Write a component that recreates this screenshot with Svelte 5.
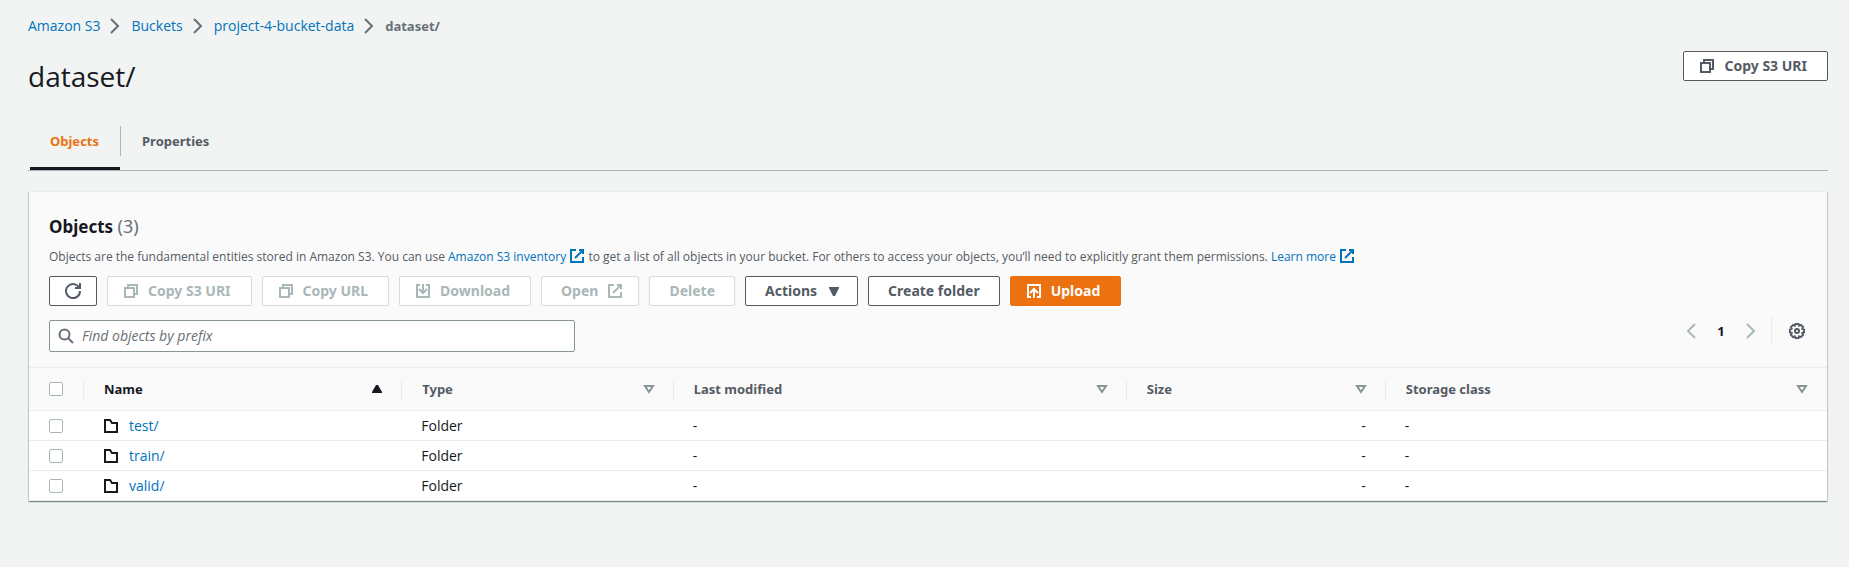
<script>
  const crumbs = ['Amazon S3', 'Buckets', 'project-4-bucket-data'];
  const columns = [
    { key: 'name', label: 'Name', sorted: true },
    { key: 'type', label: 'Type' },
    { key: 'modified', label: 'Last modified' },
    { key: 'size', label: 'Size' },
    { key: 'storage', label: 'Storage class' }
  ];
  const rows = [{ name: 'test/' }, { name: 'train/' }, { name: 'valid/' }];
</script>

{#snippet icon(kind)}
  <svg class="icon" viewBox="0 0 16 16" aria-hidden="true">
    {#if kind === 'copy'}
      <path d="M2 5h9v9H2z" /><path d="M5 5V2h9v9h-3" />
    {:else if kind === 'refresh'}
      <path d="M10 5h5V0" /><path d="M15 8a7 7 0 1 1-.7-3" />
    {:else if kind === 'external'}
      <path d="M10 2h4v4" /><path d="M6 10l8-8" /><path d="M14 9v5H2V2h5" />
    {:else if kind === 'download'}
      <path d="M5 2H2v12h12V2h-3" /><path d="M8 1v9" /><path d="M4 6l4 4 4-4" />
    {:else if kind === 'upload'}
      <path d="M5 14H2V2h12v12h-3" /><path d="M8 15V6" /><path d="M4 10l4-4 4 4" />
    {:else if kind === 'folder'}
      <path d="M2 2h5l2 3h5v9H2z" />
    {:else if kind === 'search'}
      <circle cx="6.500" cy="6.500" r="5" /><path d="M15 15l-5-5" />
    {:else if kind === 'next'}
      <path d="M4 1l7 7-7 7" />
    {:else if kind === 'prev'}
      <path d="M12 1L5 8l7 7" />
    {:else if kind === 'caret'}
      <path class="solid" d="M3 4h10v1L9 13H7L3 5z" />
    {:else if kind === 'gear'}
      <circle cx="8" cy="8" r="2" />
      <path d="M6.500 1h3l.6 1.600 1.700-.7 2.200 2.200-.7 1.700 1.700.7v3l-1.700.6.7 1.800-2.200 2.200-1.700-.8-.6 1.700h-3l-.7-1.700-1.700.8-2.200-2.200.8-1.800L1 9.500v-3l1.700-.7-.8-1.700 2.200-2.200 1.700.7z" />
    {/if}
  </svg>
{/snippet}

<div class="page">
  <nav class="crumbs" aria-label="Breadcrumbs">
    {#each crumbs as crumb}
      <a href="#top">{crumb}</a>
      <span class="sep">{@render icon('next')}</span>
    {/each}
    <strong>dataset/</strong>
  </nav>

  <header class="title">
    <h1>dataset/</h1>
    <button class="btn lead">{@render icon('copy')}Copy S3 URI</button>
  </header>

  <div class="tabs" role="tablist">
    <button class="tab active" role="tab" aria-selected="true"><span>Objects</span></button>
    <button class="tab" role="tab" aria-selected="false"><span>Properties</span></button>
  </div>

  <section class="panel">
    <div class="head">
      <h2>Objects <span>(3)</span></h2>
      <p>
        Objects are the fundamental entities stored in Amazon S3. You can use
        <a href="#inventory">Amazon S3 inventory {@render icon('external')}</a>
        to get a list of all objects in your bucket. For others to access your objects, you’ll need to explicitly grant them permissions.
        <a href="#learn">Learn more {@render icon('external')}</a>
      </p>
      <div class="actions">
        <button class="btn refresh" aria-label="Refresh">{@render icon('refresh')}</button>
        <button class="btn lead" disabled>{@render icon('copy')}Copy S3 URI</button>
        <button class="btn lead" disabled>{@render icon('copy')}Copy URL</button>
        <button class="btn lead" disabled>{@render icon('download')}Download</button>
        <button class="btn trail" disabled>Open{@render icon('external')}</button>
        <button class="btn" disabled>Delete</button>
        <button class="btn trail">Actions{@render icon('caret')}</button>
        <button class="btn">Create folder</button>
        <button class="btn lead primary">{@render icon('upload')}Upload</button>
      </div>
      <div class="filter">
        <label class="search">
          {@render icon('search')}
          <input type="text" placeholder="Find objects by prefix" aria-label="Find objects by prefix" />
        </label>
        <div class="pager">
          <button aria-label="Previous page" disabled>{@render icon('prev')}</button>
          <button class="current">1</button>
          <button aria-label="Next page" disabled>{@render icon('next')}</button>
          <span class="rule"></span>
          <button aria-label="Preferences">{@render icon('gear')}</button>
        </div>
      </div>
    </div>

    <table>
      <colgroup>
        <col class="c-check" />
        {#each columns as col}<col class="c-{col.key}" />{/each}
      </colgroup>
      <thead>
        <tr>
          <th><div class="cell"><input type="checkbox" aria-label="Select all" /></div></th>
          {#each columns as col}
            <th class:sorted={col.sorted}>
              <div class="cell">
                {col.label}
                <svg class="sort" viewBox="0 0 10 8" aria-hidden="true">
                  {#if col.sorted}
                    <path class="solid" d="M0 8V7l4-7h2l4 7v1z" />
                  {:else}
                    <path d="M1 1h8L5 7z" />
                  {/if}
                </svg>
              </div>
            </th>
          {/each}
        </tr>
      </thead>
      <tbody>
        {#each rows as row}
          <tr>
            <td class="pick"><input type="checkbox" aria-label="Select {row.name}" /></td>
            <td><a class="object" href="#object">{@render icon('folder')}{row.name}</a></td>
            <td>Folder</td>
            <td>-</td>
            <td class="num">-</td>
            <td>-</td>
          </tr>
        {/each}
      </tbody>
    </table>
  </section>
</div>

<style>
  :global(body) {
    background: #f2f3f3;
  }
  .page {
    padding: 16px 21px 60px 28px;
    font: 14px/20px 'Open Sans', 'Noto Sans', sans-serif;
    color: #16191f;
  }
  a {
    color: #0073bb;
    text-decoration: none;
  }
  button,
  input {
    font: inherit;
    margin: 0;
  }
  strong,
  .btn,
  .tab,
  .current,
  h2,
  th {
    font-family: 'Noto Sans', 'Open Sans', sans-serif;
    font-weight: 700;
  }
  .icon {
    width: 16px;
    height: 16px;
    flex: none;
    fill: none;
    stroke: currentColor;
    stroke-width: 2;
  }
  .icon .solid {
    fill: currentColor;
    stroke: none;
  }

  .crumbs {
    display: flex;
    align-items: center;
    color: #687078;
  }
  .crumbs strong {
    font-size: 13px;
  }
  .sep {
    display: flex;
    margin: 0 8px 0 7px;
  }

  .title {
    display: flex;
    justify-content: space-between;
    align-items: flex-start;
    margin-top: 15px;
  }
  h1 {
    margin: 7px 0 0;
    font-size: 28px;
    line-height: 36px;
    font-weight: 400;
  }

  .btn {
    display: inline-flex;
    align-items: center;
    gap: 9px;
    height: 30px;
    padding: 0 19px;
    border: 1px solid #545b64;
    border-radius: 2px;
    background: #fff;
    color: #545b64;
    white-space: nowrap;
  }
  .lead {
    padding: 0 20px 0 15px;
  }
  .trail {
    padding-right: 15px;
  }
  .refresh {
    padding: 0 15px;
  }
  .btn:disabled {
    border-color: #d5dbdb;
    color: #aab7b8;
  }
  .btn.primary {
    background: #ec7211;
    border-color: #ec7211;
    color: #fff;
  }

  .tabs {
    display: flex;
    margin-top: 32px;
    border-bottom: 1px solid #aab7b8;
  }
  .tab {
    padding: 0 0 11px;
    border: 0;
    border-bottom: 3px solid transparent;
    background: none;
    color: #545b64;
    font-size: 13px;
  }
  .tab span {
    display: block;
    padding: 5px 21px;
  }
  .tab.active {
    margin-left: 2px;
    border-bottom-color: #16191f;
    color: #ec7211;
  }
  .tab.active span {
    padding-left: 20px;
  }
  .tab + .tab span {
    border-left: 1px solid #aab7b8;
  }

  .panel {
    margin: 20px 1px 0;
    background: #fff;
    border-top: 1px solid #eaeded;
    box-shadow: 0 1px 1px 0 rgba(0, 28, 36, 0.3), 1px 1px 1px 0 rgba(0, 28, 36, 0.15), -1px 1px 1px 0 rgba(0, 28, 36, 0.15);
  }
  .head {
    padding: 22px 20px 15px;
    background: #fafafa;
    border-bottom: 1px solid #eaeded;
  }
  h2 {
    margin: 0;
    font-size: 17px;
    line-height: 24px;
  }
  h2 span {
    color: #687078;
    font-size: 18px;
    font-weight: 400;
  }
  p {
    margin: 8px 0 9px;
    font-size: 12px;
    line-height: 20px;
    color: #545b64;
  }
  p .icon {
    vertical-align: -3px;
  }
  .actions {
    display: flex;
    flex-wrap: wrap;
    gap: 10px;
  }
  .filter {
    display: flex;
    justify-content: space-between;
    margin-top: 14px;
  }
  .search {
    display: flex;
    align-items: center;
    gap: 8px;
    flex: 0 1 516px;
    height: 30px;
    padding: 0 0 0 8px;
    border: 1px solid #879596;
    border-radius: 2px;
    background: #fff;
    color: #687078;
  }
  .search input {
    flex: 1;
    min-width: 0;
    padding: 0;
    border: 0;
    outline: 0;
    background: none;
  }
  .search input::placeholder {
    color: #687078;
    font-style: italic;
    opacity: 1;
  }
  .pager {
    display: flex;
    align-items: center;
    height: 22px;
    padding-right: 2px;
  }
  .pager button {
    display: flex;
    justify-content: center;
    padding: 0;
    border: 0;
    background: none;
    color: #545b64;
  }
  .pager button:disabled {
    color: #aab7b8;
  }
  .pager .current {
    width: 44px;
    font-size: 13px;
    color: #16191f;
  }
  .rule {
    height: 30px;
    margin: 0 17px 0 12px;
    border-left: 1px solid #eaeded;
  }

  table {
    width: 100%;
    table-layout: fixed;
    border-collapse: separate;
    border-spacing: 0;
  }
  .c-check {
    width: 55px;
  }
  .c-name {
    width: 17.7%;
  }
  .c-type {
    width: 15.1%;
  }
  .c-modified {
    width: 25.2%;
  }
  .c-size {
    width: 14.4%;
  }
  th {
    padding: 11px 0 10px;
    background: #fafafa;
    border-bottom: 1px solid #eaeded;
    color: #545b64;
    font-size: 13px;
    text-align: left;
  }
  th.sorted {
    color: #16191f;
  }
  .cell {
    display: flex;
    align-items: center;
    justify-content: space-between;
    height: 19px;
    padding: 0 19px 2px 20px;
    border-right: 1px solid #eaeded;
  }
  th:last-child .cell {
    border-right-color: transparent;
  }
  .sort {
    width: 10px;
    height: 8px;
    overflow: visible;
    fill: none;
    stroke: #879596;
    stroke-width: 2;
  }
  .sort .solid {
    fill: #16191f;
    stroke: none;
  }
  td {
    height: 29px;
    padding: 0 20px 0 19px;
    border-bottom: 1px solid #eaeded;
  }
  .pick {
    padding-left: 20px;
  }
  .num {
    text-align: right;
  }
  .object {
    display: flex;
    align-items: center;
    gap: 10px;
  }
  .object .icon {
    color: #16191f;
  }
  input[type='checkbox'] {
    display: block;
    appearance: none;
    width: 14px;
    height: 14px;
    border: 1px solid #aab7b8;
    border-radius: 2px;
    background: #fff;
  }
</style>
